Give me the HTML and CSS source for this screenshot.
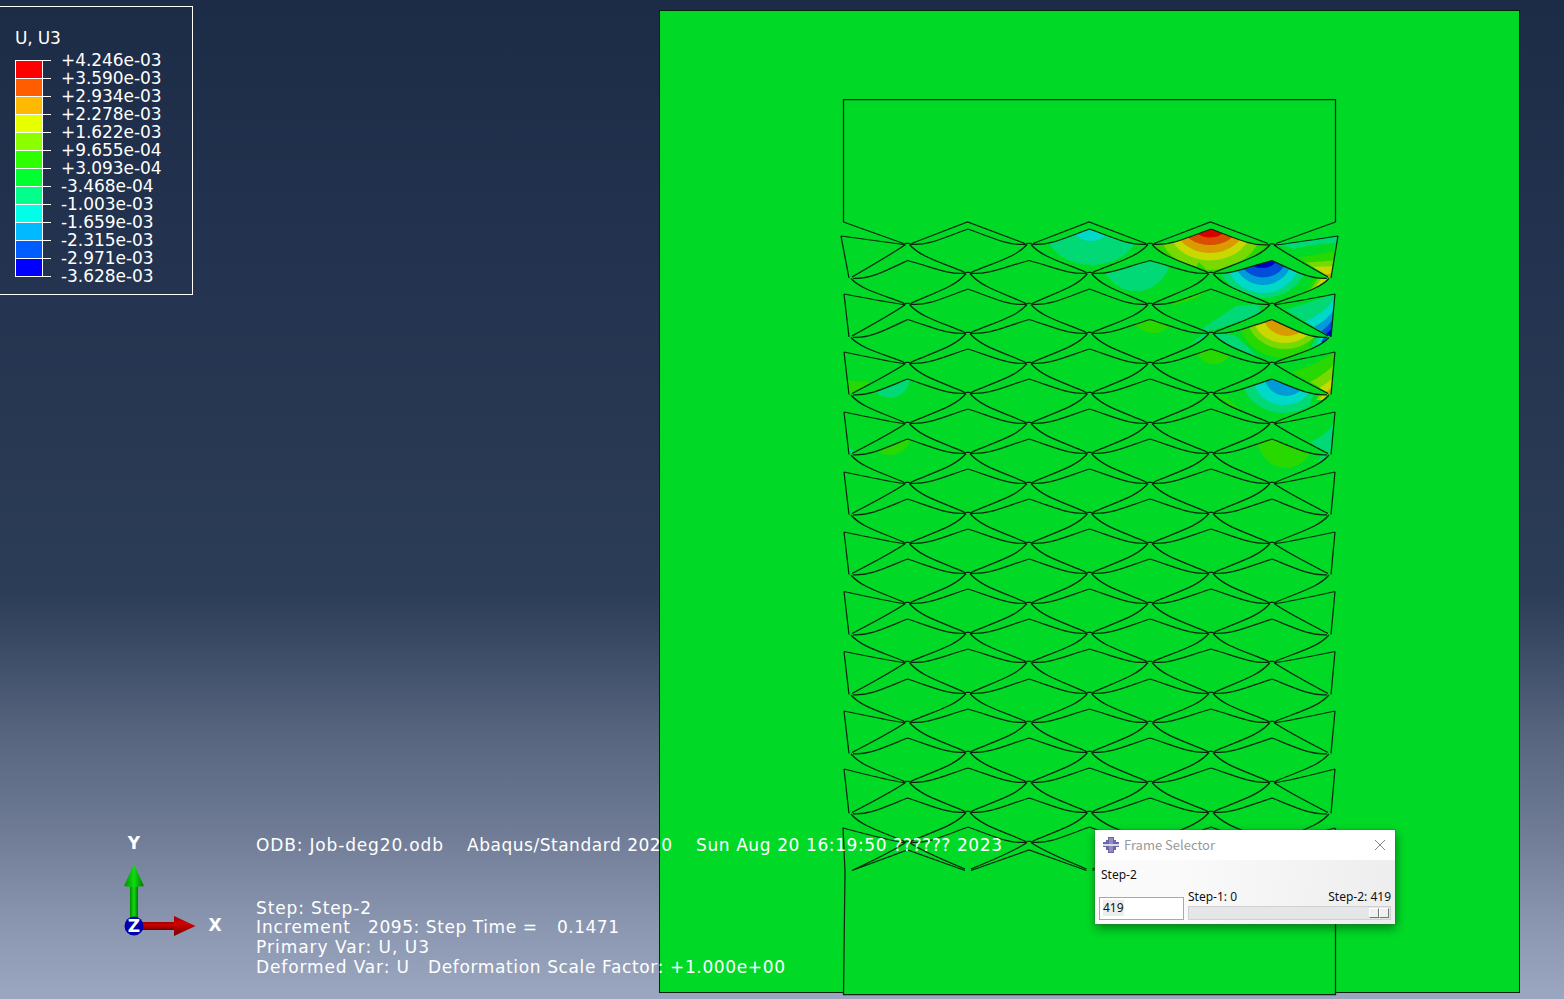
FILE: index.html
```html
<!DOCTYPE html>
<html lang="en">
<head>
<meta charset="utf-8">
<title>Viewport: Job-deg20.odb</title>
<link rel="stylesheet" href="styles.css">
</head>
<body>
<main class="viewport">
  <svg class="model" width="1564" height="999" viewBox="0 0 1564 999">
    <rect class="plate" x="659.5" y="10.5" width="860" height="982"/>
    <path class="plate" d="M843.5 222V99.5H1335.5V222"/>
    <path class="plate-fill" d="M844 985H1335V994H844Z"/>
    <g id="contours"></g>
    <path id="mesh" class="mesh"/>
    <path class="mesh" d="M843.5 99.5H1335.5M843.5 99V222M1335.5 99V222M843 827.500L845 872L843.500 994.500H1335.500V828"/>
  </svg>

  <section class="legend">
    <h1 class="legend-title">U, U3</h1>
    <div class="legend-body">
      <div class="swatches">
        <i class="c1"></i><i class="c2"></i><i class="c3"></i><i class="c4"></i><i class="c5"></i><i class="c6"></i><i class="c7"></i><i class="c8"></i><i class="c9"></i><i class="c10"></i><i class="c11"></i><i class="c12"></i>
      </div>
      <ul class="values">
        <li>+4.246e-03</li><li>+3.590e-03</li><li>+2.934e-03</li><li>+2.278e-03</li><li>+1.622e-03</li><li>+9.655e-04</li><li>+3.093e-04</li><li>-3.468e-04</li><li>-1.003e-03</li><li>-1.659e-03</li><li>-2.315e-03</li><li>-2.971e-03</li><li>-3.628e-03</li>
      </ul>
    </div>
  </section>

  <svg class="triad" width="140" height="120" viewBox="0 0 140 120">
    <defs>
      <linearGradient id="gy"><stop offset="0" stop-color="#008c00"/><stop offset=".5" stop-color="#10dc10"/><stop offset="1" stop-color="#007800"/></linearGradient>
      <linearGradient id="gx" x2="0" y2="1"><stop offset="0" stop-color="#a00000"/><stop offset=".4" stop-color="#d00000"/><stop offset="1" stop-color="#700000"/></linearGradient>
    </defs>
    <rect x="30" y="60" width="8" height="33" fill="url(#gy)"/>
    <path d="M34 39.500L44 61Q34 63 24 61Z" fill="url(#gy)"/>
    <rect x="42" y="97" width="33" height="8" fill="url(#gx)"/>
    <path d="M74 91L95.500 101L74 111Z" fill="url(#gx)"/>
    <circle cx="34" cy="101" r="9.500" fill="#0000ad"/>
    <text x="34" y="24" class="axis">Y</text>
    <text x="115" y="106" class="axis">X</text>
    <text x="34" y="107" class="axis">Z</text>
  </svg>

  <svg class="notes" width="800" height="170" viewBox="250 825 800 170">
    <text x="256" y="851" textLength="187">ODB: Job-deg20.odb</text>
    <text x="467" y="851" textLength="205">Abaqus/Standard 2020</text>
    <text x="696" y="851" textLength="306">Sun Aug 20 16:19:50 ?????? 2023</text>
    <text x="256" y="914" textLength="115">Step: Step-2</text>
    <text x="256" y="933" textLength="94">Increment</text>
    <text x="368" y="933" textLength="169">2095: Step Time =</text>
    <text x="557" y="933" textLength="62">0.1471</text>
    <text x="256" y="953" textLength="173">Primary Var: U, U3</text>
    <text x="256" y="973" textLength="153">Deformed Var: U</text>
    <text x="428" y="973" textLength="357">Deformation Scale Factor: +1.000e+00</text>
  </svg>

  <section class="dialog">
    <header class="titlebar">
      <svg width="16" height="16" viewBox="0 0 16 16"><path d="M5 0H11V3H13V5H16V7.300H0V5H3V3H5ZM0 8.700H16V10H13V13H11V16H5V13H3V10H0Z" fill="#6c68a8"/><path d="M6 1H10V7H6ZM6 9H10V15H6Z" fill="#918dc0"/></svg>
      <span class="name">Frame Selector</span>
      <svg class="close" width="12" height="12" viewBox="0 0 12 12"><path d="M1 1L11 11M11 1L1 11" stroke="#858585" fill="none"/></svg>
    </header>
    <div class="step">Step-2</div>
    <div class="controls">
      <div class="frame"><span>419</span></div>
      <div class="range">
        <div class="labels"><span>Step-1: 0</span><span>Step-2: 419</span></div>
        <div class="track"><i></i><i></i></div>
      </div>
    </div>
  </section>
</main>
<script src="mesh.js"></script>
</body>
</html>
```
FILE: styles.css
```css
* { box-sizing: border-box; }
body { margin: 0; }
.viewport {
  position: relative;
  width: 1564px;
  height: 999px;
  overflow: hidden;
  font-family: "DejaVu Sans", sans-serif;
  color: #fff;
  background: linear-gradient(#1c2b46 0, #24334f 280px, #2c3d57 590px, #3c4b66 650px, #56647e 730px, #6f7b95 830px, #8c98b2 930px, #9ba6c0 999px);
}
.model { position: absolute; left: 0; top: 0; }
.plate { fill: #00da27; stroke: #06200a; stroke-width: 1; }
.plate-fill { fill: #00da27; }
.mesh { fill: none; stroke: #07260b; stroke-width: 1.25; }

.legend {
  position: relative;
  width: 193px;
  height: 289px;
  margin-top: 6px;
  padding: 20px 0 0 15px;
  border: 1px solid #fff;
  border-left: 0;
  float: left;
}
.legend-title { margin: 0; font: 17px/22px "DejaVu Sans", sans-serif; letter-spacing: -.2px; }
.legend-body { display: flex; gap: 18px; padding-top: 11px; }
.swatches { width: 28px; height: 217px; border: 1px solid #fff; }
.swatches i { position: relative; display: block; height: 18px; border-bottom: 1px solid #fff; }
.swatches i::after { content: ""; position: absolute; left: 26px; bottom: -1px; width: 9px; height: 1px; background: #fff; }
.swatches i:first-child::before { content: ""; position: absolute; left: 26px; top: -1px; width: 9px; height: 1px; background: #fff; }
.c1 { background: #f00; } .c2 { background: #ff5d00; } .c3 { background: #ffb900; }
.c4 { background: #e8ff00; } .c5 { background: #8bff00; } .c6 { background: #2eff00; }
.c7 { background: #00ff2e; } .c8 { background: #00ff8b; } .c9 { background: #00ffe8; }
.c10 { background: #00b9ff; } .c11 { background: #005dff; } .c12 { background: #00f; }
.values { list-style: none; margin: -9px 0 0; padding: 0; font-size: 17px; line-height: 18px; letter-spacing: -.05px; white-space: nowrap; }

.triad { position: absolute; left: 100px; top: 825px; }
.axis { font: bold 17px "DejaVu Sans", sans-serif; fill: #fff; text-anchor: middle; }
.notes { position: absolute; left: 250px; top: 825px; font-size: 17px; fill: #fff; }

.dialog {
  position: absolute;
  left: 1095px;
  top: 830px;
  width: 300px;
  height: 94px;
  font: 12px/16px "Noto Sans", "Noto Sans CJK SC", sans-serif;
  color: #111;
  background: linear-gradient(100deg, #fbfafb 30%, #ededed);
  box-shadow: 0 0 0 1px rgba(60, 110, 60, .35), 1px 4px 10px rgba(0, 50, 0, .55);
}
.titlebar { display: flex; align-items: center; gap: 5px; height: 30px; padding: 0 9px 0 8px; background: #fff; color: #999; }
.name { flex: 1; font: 13px/16px "Noto Sans CJK SC", sans-serif; }
.step { padding: 7px 6px 0; height: 29px; }
.controls { display: flex; gap: 4px; padding: 0 4px; }
.frame { width: 85px; height: 23px; margin-top: 8px; padding: 2px 3px; border: 1px solid #a9a9ad; background: #fff; }
.frame span { display: inline-block; background: #ededed; }
.range { flex: 1; }
.labels { display: flex; justify-content: space-between; height: 17px; margin-right: 0; white-space: nowrap; }
.track { display: flex; justify-content: flex-end; height: 14px; padding: 1px; border: 1px solid #d0d0d2; background: #e5e6e7; }
.track i { width: 10px; height: 10px; background: #f0f0f0; border: 1px solid #fff; border-right-color: #777; border-bottom-color: #777; }
```
FILE: mesh.js
```js
const NS = 'http://www.w3.org/2000/svg';
// Rows alternate between inner (4 nodes) and outer (5 nodes).
const inner = { y: [244, 304, 363, 423, 483, 543, 603, 662, 722, 782, 842], x: [907.5, 1029, 1150, 1272] };
const outer = { y: [273, 333, 393, 453, 513, 573, 633, 693, 752, 812, 870], x: [849, 968, 1089.5, 1211, 1331] };
const innerPeak = [229, 289, 349, 409, 469, 529, 589, 649, 709, 768, 827];
const outerPeak = [260.5, 319.5, 379, 439, 499, 559, 619, 679, 738, 798, 850];
const edgeTop = [236, 294, 352, 412, 472, 532, 591.5, 651.5, 711, 769, 828];

const ya = (k, i) => inner.y[k] + (k === 0 && i === 3 ? 0.5 : 0);
const yb = (k, i) => outer.y[k] + ((i === 0 || i === 4) ? (k === 0 ? 5 : k === 1 ? 4 : 1.5) : 0);

const wing = (x, y, px, py) => {
  const w = px - x, s = Math.sign(w);
  return `M${x + s * 4} ${y + 0.3}C${x + w * .33} ${y + 1.5} ${x + w * .55} ${y - 5} ${px} ${py}`;
};
const arc = (x, y, tx, ty) => {
  const w = tx - x, h = ty - y, s = Math.sign(w);
  return `M${x + s * 2} ${y + 0.5}C${x + w * .2} ${y + h * .42} ${x + w * .48} ${y + h * .58} ${tx - s * 4} ${ty - 1}v1.200`;
};
const cap = (x, y) => `M${x - 4} ${y + .5}L${x - 1.5} ${y - .7}H${x + 1.5}L${x + 4} ${y + .5}`;

let d = '';
// Upper boundary of the cut pattern.
d += `M843.500 222L${inner.x[0] - 4} 243.500`;
for (let i = 0; i < 3; i++) {
  d += `M${inner.x[i] + 4} 243.500L${outer.x[i + 1] - .5} 222L${inner.x[i + 1] - 4} 243.500`;
}
d += `M${inner.x[3] + 4} 243.500L1335.500 222`;

for (let k = 0; k < 11; k++) {
  const last = k === 10;
  const lx = k === 0 ? 841 : last ? 843 : 844;
  const rx = k === 0 ? 1338 : 1335;
  inner.x.forEach((x, i) => {
    const y = ya(k, i);
    d += cap(x, y);
    d += i === 0 ? `M${x - 4} ${y + .5}Q${x - 16} ${y - 1} ${lx} ${edgeTop[k]}` : wing(x, y, outer.x[i], innerPeak[k]);
    d += i === 3 ? `M${x + 4} ${y + .5}Q${x + 16} ${y - 1} ${rx} ${edgeTop[k]}` : wing(x, y, outer.x[i + 1], innerPeak[k]);
    if (i === 0 || last) d += `M${x - 2} ${y + .5}Q${x - 14} ${y + 9} ${outer.x[i] + 3} ${yb(k, i) - 1}`;
    else d += arc(x, y, outer.x[i], yb(k, i));
    if (i === 3 || last) d += `M${x + 2} ${y + .5}Q${x + 14} ${y + 9} ${outer.x[i + 1] - 3} ${yb(k, i + 1) - 1}`;
    else d += arc(x, y, outer.x[i + 1], yb(k, i + 1));
    if (last) d += `M${outer.x[i] + 3} 870.500L${x} 850L${outer.x[i + 1] - 3} 870.500`;
  });
  if (last) break;
  d += `M${lx} ${edgeTop[k]}L${outer.x[0]} ${yb(k, 0)}M${rx} ${edgeTop[k]}L${outer.x[4]} ${yb(k, 4)}`;
  outer.x.forEach((x, i) => {
    const y = yb(k, i);
    if (i > 0 && i < 4) d += cap(x, y);
    if (i > 0) d += wing(x, y, inner.x[i - 1], outerPeak[k]) + arc(x, y, inner.x[i - 1], inner.y[k + 1]);
    if (i < 4) d += wing(x, y, inner.x[i], outerPeak[k]) + arc(x, y, inner.x[i], inner.y[k + 1]);
  });
}
document.getElementById('mesh').setAttribute('d', d);

const C = { red: '#d90000', verm: '#d94e00', orange: '#d99b00', yellow: '#c9d900', lime: '#78d900', grass: '#27d900', base: '#00da27', teal: '#00d976', cyan: '#00d9c8', sky: '#009bd9', blue: '#004ed9', navy: '#0000c8' };
const root = document.getElementById('contours');
let n = 0;
// Cell outline: peak, left node, bottom, right node.
function cell(l, ly, r, ry, px, py, by) {
  return `M${l + 3} ${ly}C${l + 20} ${ly + 1.5} ${l + 33} ${ly - 5} ${px} ${py}C${r - 33} ${ry - 5} ${r - 20} ${ry + 1.5} ${r - 3} ${ry}C${r - 12} ${ry + 12} ${r - 29} ${ry + 17} ${px + 3} ${by}H${px - 3}C${l + 29} ${ly + 17} ${l + 12} ${ly + 12} ${l + 3} ${ly}Z`;
}
function group(outline, shapes) {
  const id = 'cell' + n++;
  const clip = document.createElementNS(NS, 'clipPath');
  clip.id = id;
  clip.innerHTML = `<path d="${outline}"/>`;
  const g = document.createElementNS(NS, 'g');
  g.setAttribute('clip-path', `url(#${id})`);
  g.innerHTML = shapes.map(s => s.length === 2
    ? `<path d="${s[1]}" fill="${C[s[0]]}"/>`
    : `<ellipse cx="${s[1]}" cy="${s[2]}" rx="${s[3]}" ry="${s[4]}" fill="${C[s[0]]}"/>`).join('');
  root.append(clip, g);
}
const cellA = (k, i) => cell(inner.x[i], inner.y[k], inner.x[i + 1], inner.y[k], outer.x[i + 1], innerPeak[k], outer.y[k]);
const cellB = (k, i) => cell(outer.x[i], yb(k, i), outer.x[i + 1], yb(k, i + 1), inner.x[i], outerPeak[k], inner.y[k + 1]);
const edgeCell = k => `M1276 ${inner.y[k]}L${k ? 1335 : 1338} ${edgeTop[k]}L1331 ${yb(k, 4)}Z`;

group(cellA(0, 1), [['teal', 1092, 226, 48, 39], ['cyan', 1091, 223, 20, 18]]);
group(cellA(0, 2), [['grass', 1209, 225, 62, 52], ['lime', 1210, 226, 52, 44], ['yellow', 1210, 226, 42, 34.5], ['orange', 1210, 226, 35, 27], ['verm', 1210, 225, 28, 20], ['red', 1210, 225, 18, 12.5]]);
group(cellB(0, 2), [['teal', 1136, 258, 34, 33]]);
group(cellB(0, 1), [['grass', 1026, 257, 8, 6]]);
group(cellB(0, 3), [
  ['grass', 'M1296 300Q1309 292 1318 270L1336 270V306Z'], ['lime', 'M1303 300Q1313 288 1322 271L1336 270V306Z'], ['yellow', 'M1314 290L1325 273H1336V300Z'],
  ['teal', 1263, 258, 45, 40], ['cyan', 1263, 258, 37, 35], ['sky', 1263, 258, 29, 27], ['blue', 1263, 258, 23, 19.5], ['navy', 1262, 256, 16, 12]]);
group(edgeCell(0), [['teal', 'M1276 244L1338 235V243Q1312 244 1294 249Z'], ['grass', 'M1296 258Q1315 255 1340 250V284H1300Z'], ['lime', 'M1300 263L1340 260V284H1300Z'], ['yellow', 'M1308 267L1340 266V284H1300Z'], ['orange', 'M1322 275L1340 272V284H1322Z']]);
group(cellA(1, 2), [['grass', 'M1180 303Q1199 300 1212 286L1196 284L1172 306Z'], ['teal', 'M1196 333Q1205 327 1236 306L1258 304L1262 314L1220 328Z']]);
group(cellA(0, 2), [['grass', 'M1186 276Q1194 272 1199 262L1212 276Z']]);
group(cellB(0, 3), [['grass', 'M1296 300Q1309 292 1318 270L1322 270Q1314 288 1302 297Z']]);
group(cellB(1, 1), []);
group(cellB(1, 2), [['grass', 1153, 316, 20, 17], ['teal', 'M1192 343Q1202 332 1216 330L1208 340Z']]);
group(edgeCell(1), [['teal', 'M1285 310L1338 293V340H1320Z'], ['cyan', 'M1304 322Q1326 313 1338 294V342H1320Z'], ['sky', 'M1312 328Q1330 319 1337 305V342H1320Z'], ['blue', 'M1319 333Q1330 325 1337 314V342H1320Z'], ['navy', 'M1323 336Q1330 332 1337 322V342H1320Z']]);
group(cellB(1, 3), [['teal', 'M1211 333L1234 335Q1250 348 1259 359L1240 354Z'], ['grass', 1284, 316, 46, 42], ['lime', 1285, 316, 38, 33], ['yellow', 1285, 316, 32, 27], ['orange', 1287, 314, 24, 22], ['base', 'M1308 346Q1314 340 1317 334H1332V350Z'], ['teal', 'M1311 346L1319 334H1332V350Z'], ['cyan', 'M1317 344L1321 336H1332V348Z'], ['blue', 'M1321 342L1325 336H1333V343Z']]);
group(cellA(2, 2), [['grass', 1214, 348, 18, 16]]);
group(edgeCell(2), [['grass', 'M1292 372Q1320 364 1337 350V396H1330Z'], ['lime', 'M1310 382Q1328 373 1337 361V397Z'], ['yellow', 'M1319 388Q1330 382 1337 373V397Z'], ['orange', 'M1326 392L1335 385V397Z']]);
group(cellB(2, 3), [['grass', 'M1218 395Q1228 397 1245 414L1237 411Z'], ['teal', 1284, 380, 41, 33], ['cyan', 1284, 376, 31, 29], ['sky', 1286, 374, 22, 22], ['base', 'M1309 407L1315 391H1332V402Z'], ['lime', 'M1316 400L1322 391H1332V400Z'], ['yellow', 'M1319 400L1325 391H1332V398Z']]);
group(cellB(2, 0), [['teal', 890, 376, 20, 22]]);
group('M844 352L904 364L849 395Z', [['grass', 'M844 380Q857 382 870 382L849 398Z']]);
group(cellB(3, 0), [['grass', 890, 435, 21, 20]]);
group('M844 412L904 424L849 455Z', [['teal', 'M844 446L854 450L849 457Z']]);
group(edgeCell(3), [['teal', 'M1311 442Q1328 434 1336 420V456H1322Z']]);
group(cellB(3, 3), [['grass', 1286, 436, 29, 32], ['teal', 'M1318 462L1322 453H1331V460Z']]);
```
